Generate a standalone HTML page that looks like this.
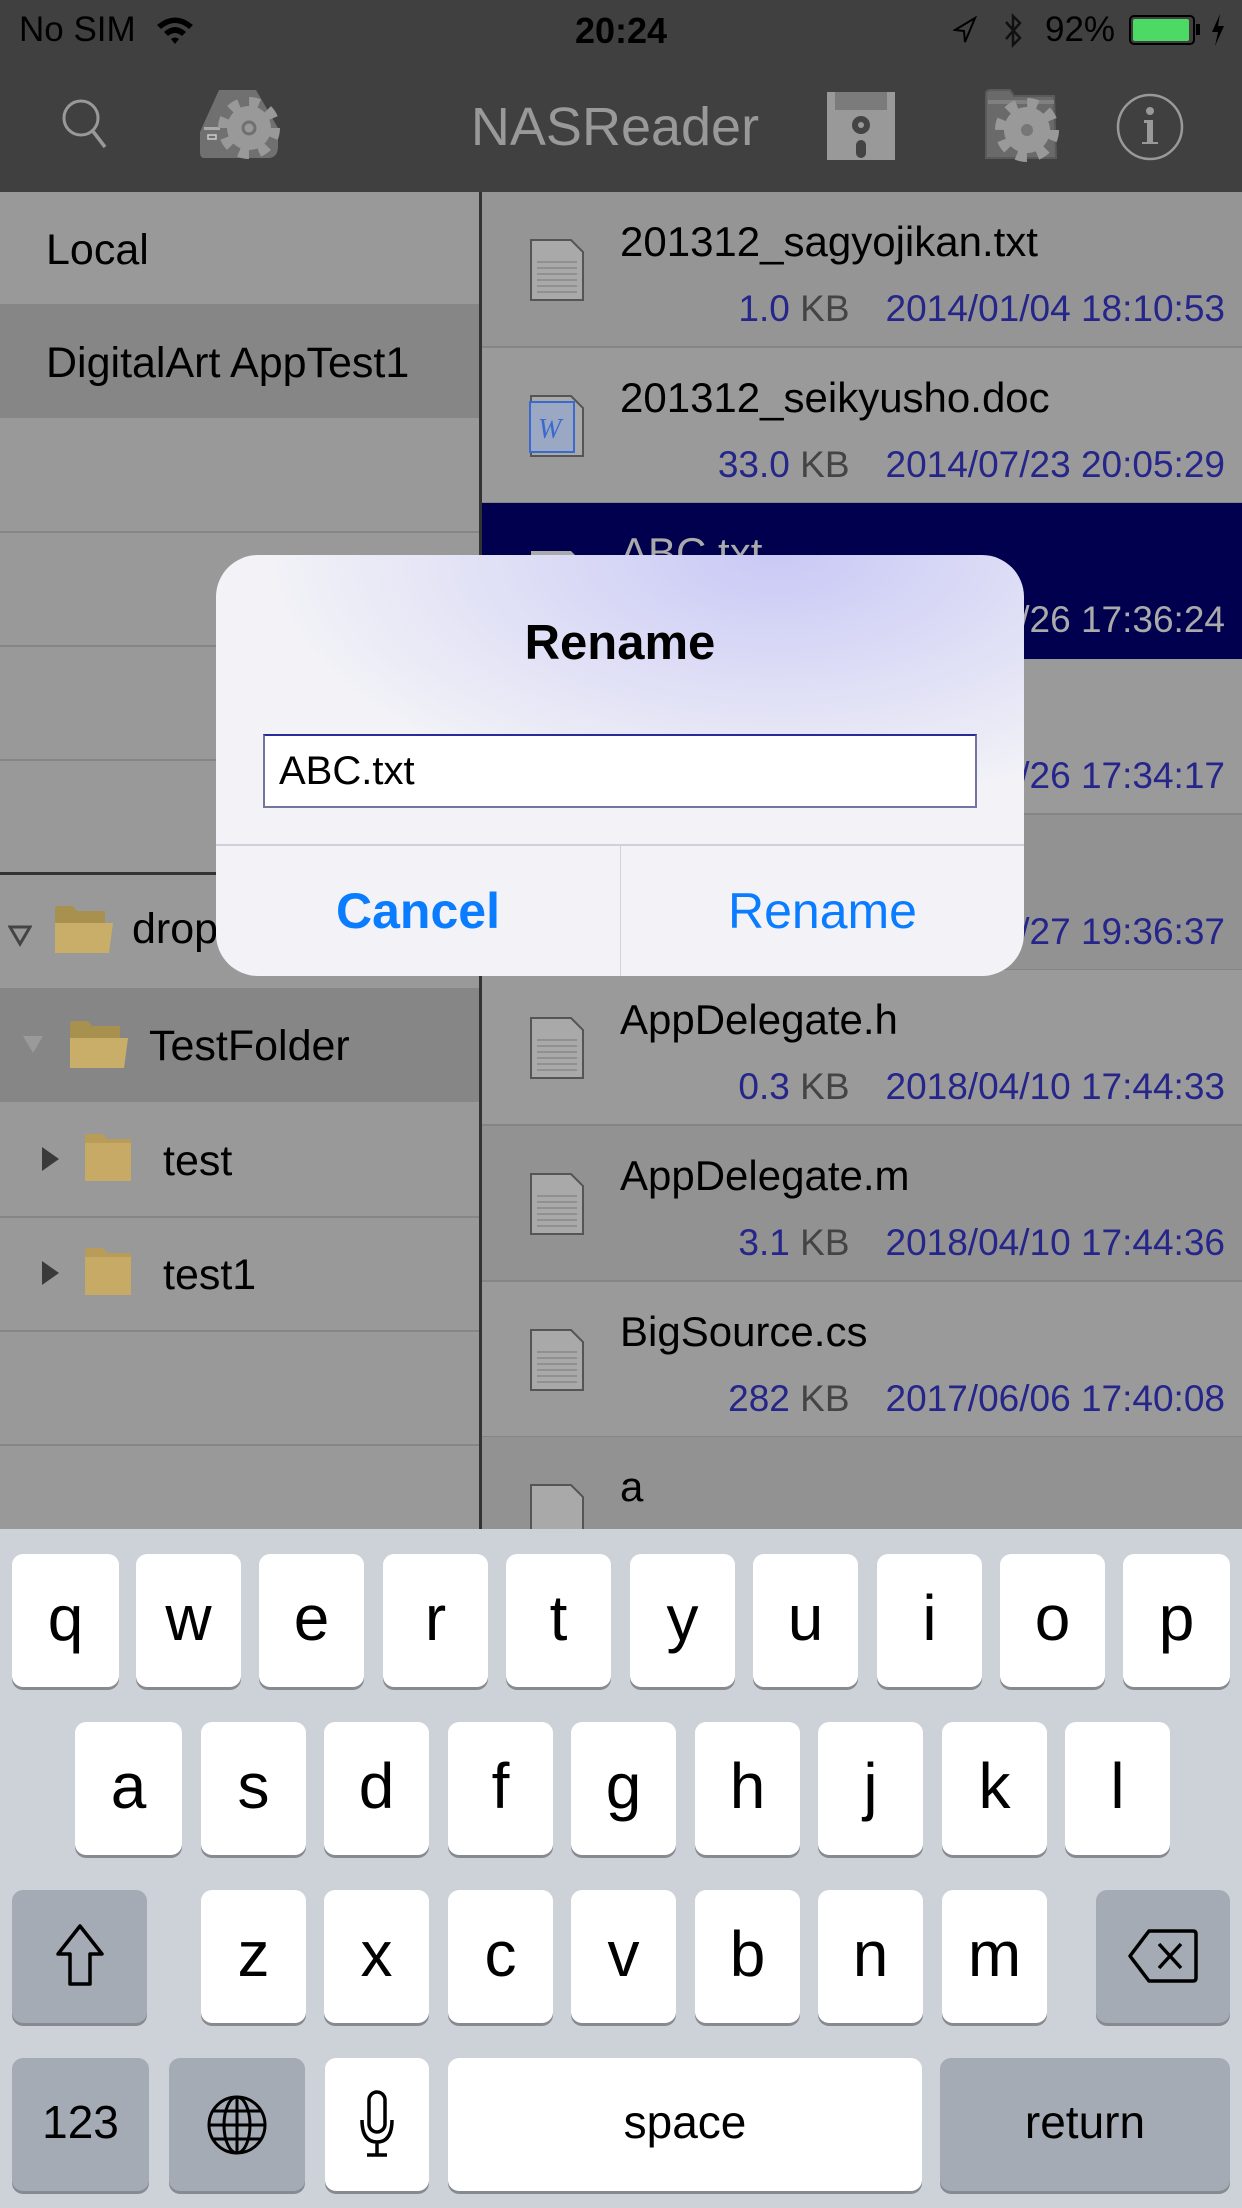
<!DOCTYPE html>
<html><head><meta charset="utf-8">
<style>
*{margin:0;padding:0;box-sizing:border-box}
body{width:1242px;height:2208px;overflow:hidden;position:relative;background:#999;font-family:"Liberation Sans",sans-serif}
.a{position:absolute}
.lrow{position:absolute;left:0;width:479px;font-size:43px;color:#000}
.rrow{position:absolute;left:482px;width:760px;height:156px;border-bottom:2px solid #858585}
.name{position:absolute;left:138px;top:26px;font-size:42px;color:#000;white-space:nowrap}
.meta{position:absolute;right:17px;top:96px;font-size:37px;color:#25258a;white-space:nowrap}
.meta b{font-weight:normal;color:#444}
.meta span{margin-left:36px}
.doc{position:absolute;left:47px;top:46px}
.key{position:absolute;background:#fff;border-radius:11px;box-shadow:0 3px 0 #878a90;font-size:64px;color:#000;text-align:center;line-height:128px;height:133px}
.sp{background:#a5abb5}
</style></head><body>
<!-- header -->
<div class="a" style="left:0;top:0;width:1242px;height:192px;background:#404040"></div>
<div class="a" style="left:19px;top:10px;font-size:35px;color:#000">No SIM</div>
<svg class="a" style="left:155px;top:14px" width="40" height="32" viewBox="0 0 40 32"><path d="M2 11 Q20 -4 38 11 L34 15 Q20 3 6 15Z M9 18 Q20 8 31 18 L27 22 Q20 16 13 22Z M16 25 Q20 22 24 25 L20 30Z" fill="#000"/></svg>
<div class="a" style="left:0;width:1242px;top:10px;text-align:center;font-size:36px;font-weight:bold;color:#000">20:24</div>
<svg class="a" style="left:953px;top:16px" width="24" height="28"><path d="M22 2 L2 14 L11 15 L12 26Z" fill="none" stroke="#000" stroke-width="2"/></svg>
<svg class="a" style="left:1000px;top:12px" width="26" height="38"><path d="M6 10 L20 26 L13 33 L13 4 L20 11 L6 27" fill="none" stroke="#111" stroke-width="2.5"/></svg>
<div class="a" style="left:1045px;top:10px;font-size:35px;color:#000">92%</div>
<div class="a" style="left:1129px;top:15px;width:66px;height:30px;border:2px solid #000;border-radius:5px;padding:2px"><div style="width:56px;height:22px;background:#4cd964;border-radius:2px"></div></div>
<div class="a" style="left:1196px;top:24px;width:4px;height:11px;background:#000"></div>
<svg class="a" style="left:1210px;top:14px" width="16" height="32"><path d="M10 0 L2 18 L8 18 L5 32 L14 12 L8 12Z" fill="#000"/></svg>
<!-- nav icons -->
<svg class="a" style="left:55px;top:92px" width="60" height="60"><circle cx="26" cy="26" r="17" fill="none" stroke="#999" stroke-width="3"/><path d="M37 38 L50 55" stroke="#999" stroke-width="3.5"/></svg>
<svg class="a" style="left:198px;top:88px" width="86" height="76"><path d="M21 2 L58 2 L80 40 L80 58 Q80 70 70 70 L6 70 Q2 70 2 64 L2 44Z" fill="#707070"/><rect x="6" y="39" width="16" height="3" fill="#aaa"/><rect x="10" y="47" width="8" height="4" fill="none" stroke="#ccc" stroke-width="1.5"/><circle cx="51" cy="40" r="26" fill="none" stroke="#999" stroke-width="10" stroke-dasharray="10.2 10.2"/><circle cx="51" cy="40" r="22" fill="#999"/><circle cx="51" cy="40" r="6" fill="none" stroke="#707070" stroke-width="3"/></svg>
<div class="a" style="left:0;width:1242px;top:96px;text-align:center;font-size:54px;color:#999"><span style="position:relative;left:-6px">NASReader</span></div>
<svg class="a" style="left:827px;top:92px" width="68" height="68"><rect width="68" height="68" fill="#999"/><rect x="8" y="0" width="52" height="18" fill="#7b7b7b"/><circle cx="34" cy="33" r="9" fill="#444"/><circle cx="34" cy="33" r="3" fill="#999"/><rect x="29" y="48" width="10" height="18" rx="5" fill="#444"/></svg>
<svg class="a" style="left:984px;top:88px" width="76" height="76"><path d="M2 6 Q2 2 6 2 L26 2 L30 8 L70 8 L72 70 L2 70Z" fill="#6a6a6a" stroke="#5a5a5a" stroke-width="2"/><rect x="4" y="12" width="66" height="4" fill="#808080"/><circle cx="43" cy="42" r="27" fill="none" stroke="#999" stroke-width="10" stroke-dasharray="10.6 10.6"/><circle cx="43" cy="42" r="23" fill="#999"/><circle cx="43" cy="42" r="6" fill="#777"/></svg>
<svg class="a" style="left:1115px;top:92px" width="70" height="70"><circle cx="35" cy="35" r="32" fill="none" stroke="#999" stroke-width="2.5"/><circle cx="35" cy="19" r="4" fill="#999"/><path d="M29 28 L38 28 L38 50 L43 50 L43 52 L27 52 L27 50 L32 50 L32 31 L29 31Z" fill="#999"/></svg>

<!-- left panel -->
<div class="a" style="left:0;top:192px;width:479px;height:1337px;background:#999"></div>
<div class="lrow" style="top:192px;height:112px;padding:34px 0 0 46px">Local</div>
<div class="lrow" style="top:304px;height:114px;background:#868686;padding:35px 0 0 46px">DigitalArt AppTest1</div>
<div class="a" style="left:0;top:531px;width:479px;height:2px;background:#858585"></div>
<div class="a" style="left:0;top:645px;width:479px;height:2px;background:#858585"></div>
<div class="a" style="left:0;top:759px;width:479px;height:2px;background:#858585"></div>
<div class="a" style="left:0;top:872px;width:479px;height:3px;background:#333"></div>
<!-- tree -->
<svg class="a" style="left:8px;top:925px" width="24" height="22"><path d="M2 2 L22 2 L12 19Z" fill="none" stroke="#444" stroke-width="3"/></svg>
<svg class="a" style="left:53px;top:905px" width="62" height="50"><path d="M2 4 Q2 1 5 1 L20 1 L24 6 L52 6 L52 48 L2 48Z" fill="#a8904e"/><path d="M2 18 L60 18 L56 48 L2 48Z" fill="#c9ae6a"/></svg>
<div class="lrow" style="top:905px;left:132px;width:auto">drop</div>
<div class="a" style="left:0;top:988px;width:479px;height:114px;background:#868686"></div>
<svg class="a" style="left:22px;top:1035px" width="22" height="20"><path d="M1 1 L21 1 L11 18Z" fill="#9a9a9a"/></svg>
<svg class="a" style="left:68px;top:1020px" width="62" height="50"><path d="M2 4 Q2 1 5 1 L20 1 L24 6 L52 6 L52 48 L2 48Z" fill="#a8904e"/><path d="M2 18 L60 18 L56 48 L2 48Z" fill="#c9ae6a"/></svg>
<div class="lrow" style="top:1022px;left:149px;width:auto">TestFolder</div>
<svg class="a" style="left:41px;top:1146px" width="20" height="26"><path d="M1 1 L18 13 L1 25Z" fill="#3a3a3a"/></svg>
<svg class="a" style="left:83px;top:1133px" width="62" height="50"><path d="M2 4 Q2 1 5 1 L20 1 L24 6 L48 6 L48 48 L2 48Z" fill="#b89c58"/><path d="M2 10 L48 10 L48 48 L2 48Z" fill="#c6aa66"/></svg>
<div class="lrow" style="top:1137px;left:163px;width:auto">test</div>
<div class="a" style="left:0;top:1216px;width:479px;height:2px;background:#858585"></div>
<svg class="a" style="left:41px;top:1260px" width="20" height="26"><path d="M1 1 L18 13 L1 25Z" fill="#3a3a3a"/></svg>
<svg class="a" style="left:83px;top:1247px" width="62" height="50"><path d="M2 4 Q2 1 5 1 L20 1 L24 6 L48 6 L48 48 L2 48Z" fill="#b89c58"/><path d="M2 10 L48 10 L48 48 L2 48Z" fill="#c6aa66"/></svg>
<div class="lrow" style="top:1251px;left:163px;width:auto">test1</div>
<div class="a" style="left:0;top:1330px;width:479px;height:2px;background:#858585"></div>
<div class="a" style="left:0;top:1444px;width:479px;height:2px;background:#858585"></div>
<div class="a" style="left:479px;top:192px;width:3px;height:1337px;background:#333"></div>

<!-- right list -->
<div class="rrow" style="top:192px;background:#959595"><svg class="doc" width="56" height="64"><path d="M2 2 L42 2 L54 14 L54 62 L2 62Z" fill="#a9a9a9" stroke="#555" stroke-width="2"/><path d="M8 24h40M8 30h40M8 36h40M8 42h40M8 48h40M8 54h40" stroke="#888" stroke-width="1.5"/></svg><div class="name">201312_sagyojikan.txt</div><div class="meta">1.0 <b>KB</b><span>2014/01/04 18:10:53</span></div></div>
<div class="rrow" style="top:348px;background:#9a9a9a"><svg class="doc" width="56" height="64"><path d="M2 2 L42 2 L54 14 L54 62 L2 62Z" fill="#a9a9a9" stroke="#555" stroke-width="2"/><rect x="1" y="8" width="44" height="50" fill="#9aa8c4" stroke="#3a6ad0" stroke-width="2"/><text x="9" y="44" font-size="28" font-style="italic" font-family="Liberation Serif" fill="#3a6ad0">W</text></svg><div class="name">201312_seikyusho.doc</div><div class="meta">33.0 <b>KB</b><span>2014/07/23 20:05:29</span></div></div>
<div class="rrow" style="top:503px;background:#00004e;border-bottom-color:#00004e"><svg class="doc" width="56" height="64"><path d="M2 2 L42 2 L54 14 L54 62 L2 62Z" fill="#aaa"/></svg><div class="name" style="color:#aaa">ABC.txt</div><div class="meta" style="color:#aaa">0.1 <b style="color:#aaa">KB</b><span>2018/04/26 17:36:24</span></div></div>
<div class="rrow" style="top:659px;background:#9a9a9a"><div class="meta">0.1 <b>KB</b><span>2018/04/26 17:34:17</span></div></div>
<div class="rrow" style="top:815px;background:#929292"><div class="meta">0.1 <b>KB</b><span>2018/04/27 19:36:37</span></div></div>
<div class="rrow" style="top:970px;background:#9a9a9a"><svg class="doc" width="56" height="64"><path d="M2 2 L42 2 L54 14 L54 62 L2 62Z" fill="#a9a9a9" stroke="#555" stroke-width="2"/><path d="M8 24h40M8 30h40M8 36h40M8 42h40M8 48h40M8 54h40" stroke="#888" stroke-width="1.5"/></svg><div class="name">AppDelegate.h</div><div class="meta">0.3 <b>KB</b><span>2018/04/10 17:44:33</span></div></div>
<div class="rrow" style="top:1126px;background:#929292"><svg class="doc" width="56" height="64"><path d="M2 2 L42 2 L54 14 L54 62 L2 62Z" fill="#a9a9a9" stroke="#555" stroke-width="2"/><path d="M8 24h40M8 30h40M8 36h40M8 42h40M8 48h40M8 54h40" stroke="#888" stroke-width="1.5"/></svg><div class="name">AppDelegate.m</div><div class="meta">3.1 <b>KB</b><span>2018/04/10 17:44:36</span></div></div>
<div class="rrow" style="top:1282px;background:#9a9a9a"><svg class="doc" width="56" height="64"><path d="M2 2 L42 2 L54 14 L54 62 L2 62Z" fill="#a9a9a9" stroke="#555" stroke-width="2"/><path d="M8 24h40M8 30h40M8 36h40M8 42h40M8 48h40M8 54h40" stroke="#888" stroke-width="1.5"/></svg><div class="name">BigSource.cs</div><div class="meta">282 <b>KB</b><span>2017/06/06 17:40:08</span></div></div>
<div class="rrow" style="top:1437px;background:#929292"><svg class="doc" width="56" height="64"><path d="M2 2 L42 2 L54 14 L54 62 L2 62Z" fill="#a9a9a9" stroke="#555" stroke-width="2"/></svg><div class="name">a</div></div>

<!-- dialog -->
<div class="a" style="left:216px;top:555px;width:808px;height:421px;border-radius:42px;overflow:hidden;background:radial-gradient(ellipse 520px 260px at 560px 0px,#c9c9f6 0%,#dcdcf6 45%,#f3f3f7 100%)">
  <div class="a" style="left:0;width:808px;top:60px;text-align:center;font-size:49px;font-weight:bold;color:#000">Rename</div>
  <div class="a" style="left:47px;top:179px;width:714px;height:74px;background:#fff;border:2px solid #7474a0;border-top-color:#2a2a9a;font-size:40px;line-height:70px;padding-left:14px;color:#000">ABC.txt</div>
  <div class="a" style="left:0;top:289px;width:808px;height:2px;background:#cfd0dc"></div>
  <div class="a" style="left:404px;top:291px;width:1px;height:130px;background:#d4d4d8"></div>
  <div class="a" style="left:0;width:404px;top:327px;text-align:center;font-size:50px;font-weight:bold;color:#0a7cff">Cancel</div>
  <div class="a" style="left:405px;width:403px;top:327px;text-align:center;font-size:50px;color:#0a7cff">Rename</div>
</div>

<!-- keyboard -->
<div class="a" style="left:0;top:1529px;width:1242px;height:679px;background:#cdd1d8"></div>
<div class="key" style="left:12px;top:1554px;width:107px">q</div>
<div class="key" style="left:136px;top:1554px;width:105px">w</div>
<div class="key" style="left:259px;top:1554px;width:105px">e</div>
<div class="key" style="left:383px;top:1554px;width:105px">r</div>
<div class="key" style="left:506px;top:1554px;width:105px">t</div>
<div class="key" style="left:630px;top:1554px;width:105px">y</div>
<div class="key" style="left:753px;top:1554px;width:105px">u</div>
<div class="key" style="left:877px;top:1554px;width:105px">i</div>
<div class="key" style="left:1000px;top:1554px;width:105px">o</div>
<div class="key" style="left:1123px;top:1554px;width:107px">p</div>
<div class="key" style="left:75px;top:1722px;width:107px">a</div>
<div class="key" style="left:201px;top:1722px;width:105px">s</div>
<div class="key" style="left:324px;top:1722px;width:105px">d</div>
<div class="key" style="left:448px;top:1722px;width:105px">f</div>
<div class="key" style="left:571px;top:1722px;width:105px">g</div>
<div class="key" style="left:695px;top:1722px;width:105px">h</div>
<div class="key" style="left:818px;top:1722px;width:105px">j</div>
<div class="key" style="left:942px;top:1722px;width:105px">k</div>
<div class="key" style="left:1065px;top:1722px;width:105px">l</div>
<div class="key sp" style="left:12px;top:1890px;width:135px"><svg width="60" height="70" viewBox="0 0 60 70" style="margin-top:32px"><path d="M30 4 L52 32 L40 32 L40 62 L20 62 L20 32 L8 32Z" fill="none" stroke="#000" stroke-width="3.5" stroke-linejoin="round"/></svg></div>
<div class="key" style="left:201px;top:1890px;width:105px">z</div>
<div class="key" style="left:324px;top:1890px;width:105px">x</div>
<div class="key" style="left:448px;top:1890px;width:105px">c</div>
<div class="key" style="left:571px;top:1890px;width:105px">v</div>
<div class="key" style="left:695px;top:1890px;width:105px">b</div>
<div class="key" style="left:818px;top:1890px;width:105px">n</div>
<div class="key" style="left:942px;top:1890px;width:105px">m</div>
<div class="key sp" style="left:1096px;top:1890px;width:134px"><svg width="72" height="56" viewBox="0 0 72 56" style="margin-top:38px"><path d="M22 3 L66 3 Q69 3 69 6 L69 50 Q69 53 66 53 L22 53 L3 28Z" fill="none" stroke="#000" stroke-width="3.5" stroke-linejoin="round"/><path d="M32 16 L54 40 M54 16 L32 40" stroke="#000" stroke-width="3.5"/></svg></div>
<div class="key sp" style="left:12px;top:2058px;width:137px;font-size:46px">123</div>
<div class="key sp" style="left:169px;top:2058px;width:136px"><svg width="62" height="62" viewBox="0 0 62 62" style="margin-top:36px"><g fill="none" stroke="#000" stroke-width="3"><circle cx="31" cy="31" r="28"/><ellipse cx="31" cy="31" rx="13" ry="28"/><path d="M31 3v56M3 31h56M7 17h48M7 45h48"/></g></svg></div>
<div class="key" style="left:325px;top:2058px;width:104px"><svg width="40" height="70" viewBox="0 0 40 70" style="margin-top:32px"><g fill="none" stroke="#000" stroke-width="3.5"><rect x="12" y="2" width="16" height="40" rx="8"/><path d="M5 30 Q5 52 20 52 Q35 52 35 30 M20 52 V64 M10 65 H30"/></g></svg></div>
<div class="key" style="left:448px;top:2058px;width:474px;font-size:46px">space</div>
<div class="key sp" style="left:940px;top:2058px;width:290px;font-size:46px">return</div>
</body></html>
